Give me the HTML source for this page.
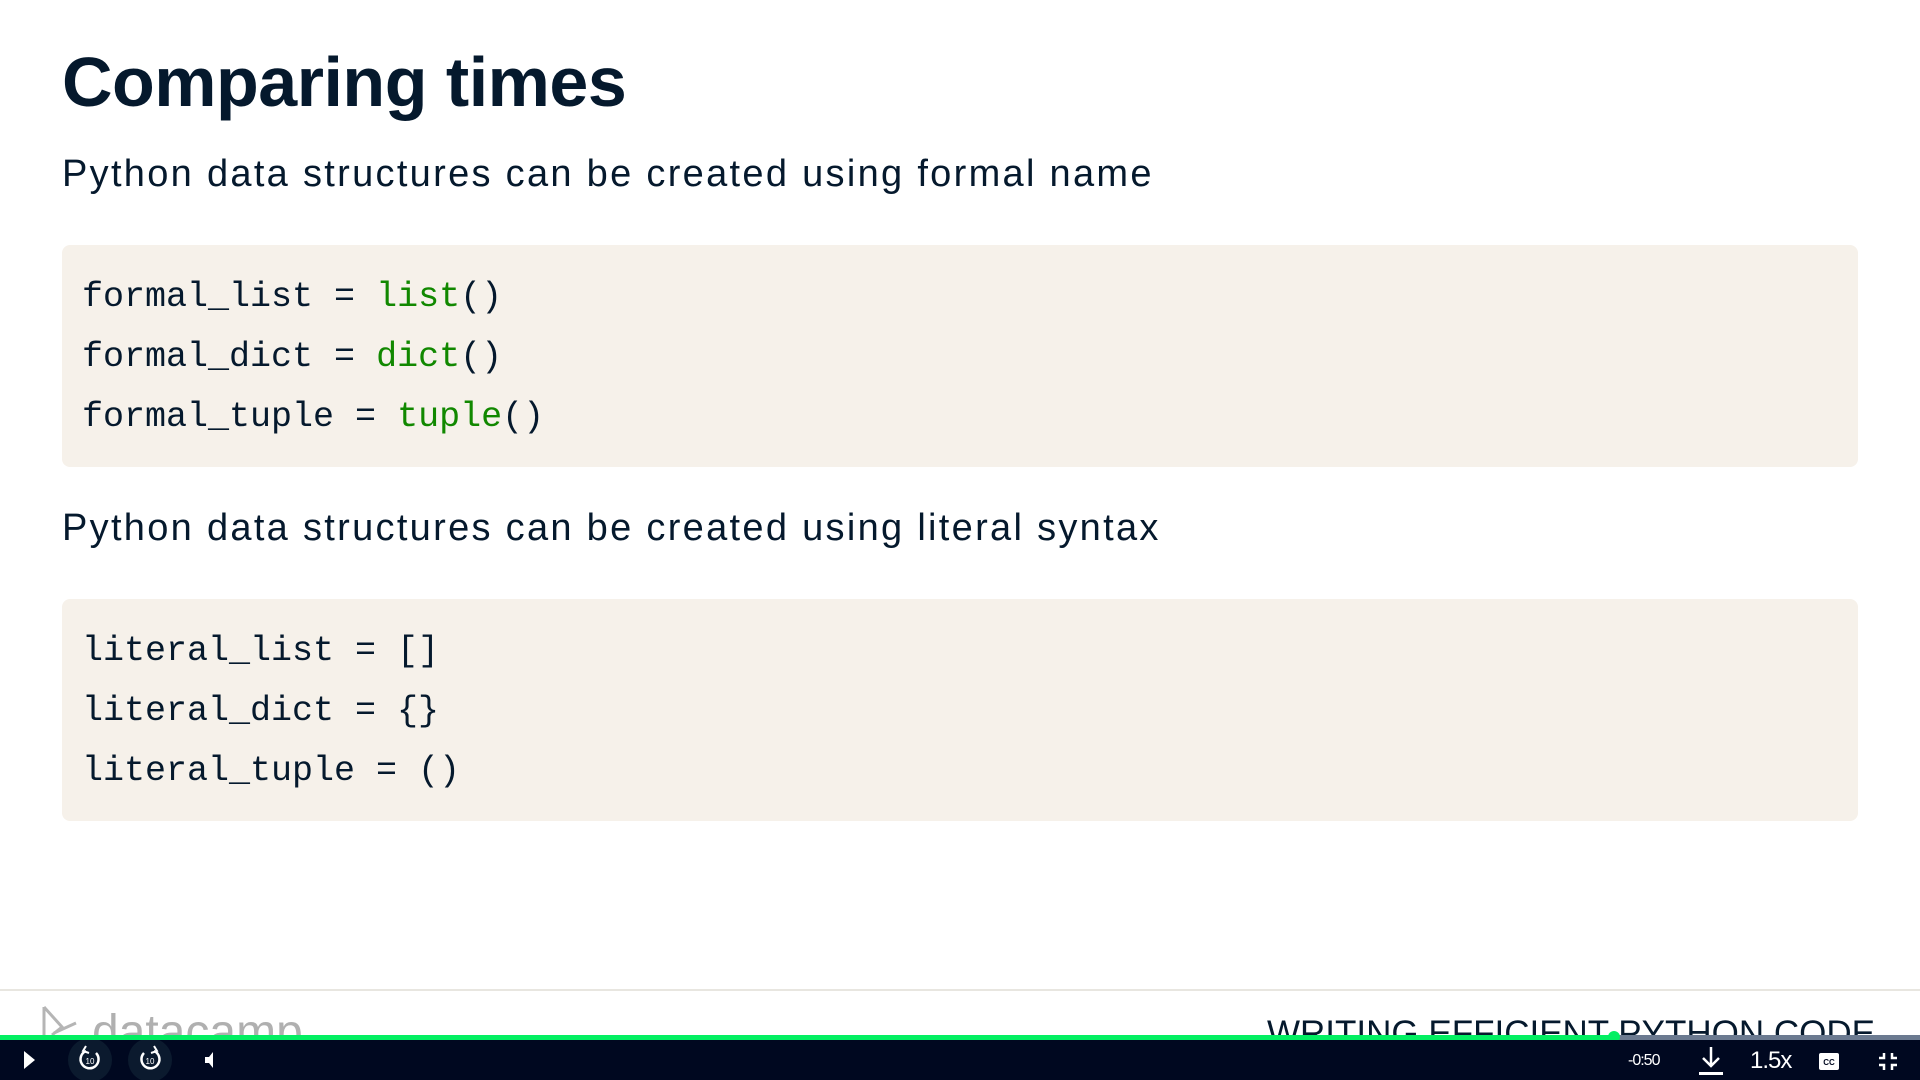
<!DOCTYPE html>
<html><head><meta charset="utf-8"><style>
*{margin:0;padding:0;box-sizing:border-box}
body{width:1920px;height:1080px;background:#fff;position:relative;overflow:hidden;font-family:"Liberation Sans",sans-serif;color:#05192d}
.abs{position:absolute;white-space:nowrap}
h1{position:absolute;left:62px;top:42px;font-size:70px;font-weight:bold;letter-spacing:-0.5px;line-height:80px}
.sub{position:absolute;left:62px;font-size:38px;letter-spacing:2.3px;line-height:44px;white-space:nowrap}
.box{position:absolute;left:62px;width:1796px;height:222px;background:#f6f1ea;border-radius:8px}
.code{position:absolute;left:82px;font-family:"Liberation Mono",monospace;font-size:35px;line-height:40px;white-space:nowrap;color:#05192d}
.g{color:#118800}
</style></head><body>
<h1>Comparing times</h1>
<div class="sub" style="top:152px">Python data structures can be created using formal name</div>
<div class="box" style="top:245px"></div>
<div class="code" style="top:277px">formal_list = <span class="g">list</span>()</div>
<div class="code" style="top:337px">formal_dict = <span class="g">dict</span>()</div>
<div class="code" style="top:397px">formal_tuple = <span class="g">tuple</span>()</div>
<div class="sub" style="top:506px">Python data structures can be created using literal syntax</div>
<div class="box" style="top:599px"></div>
<div class="code" style="top:631px">literal_list = []</div>
<div class="code" style="top:691px">literal_dict = {}</div>
<div class="code" style="top:751px">literal_tuple = ()</div>

<div class="abs" style="left:0;top:989px;width:1920px;height:2px;background:#e8e6e0"></div>
<svg class="abs" style="left:40px;top:1005px" width="45" height="40"><path d="M4 2 L4 34 M4 2 L22 22 L12 30 M14 28 L36 18" stroke="#b5b5b5" stroke-width="3" fill="none"/></svg>
<div class="abs" style="left:92px;top:1005px;font-size:48px;color:#b0b0b0;letter-spacing:0px">datacamp</div>
<div class="abs" style="left:1267px;top:1014px;font-size:35px;color:#05192d">WRITING EFFICIENT PYTHON CODE</div>

<div class="abs" style="left:0;top:1035px;width:1920px;height:5px;background:#6b7a90"></div>
<div class="abs" style="left:0;top:1035px;width:1614px;height:5px;background:#03ef62"></div>
<div class="abs" style="left:1608px;top:1031px;width:12px;height:12px;border-radius:6px;background:#03ef62"></div>
<div class="abs" style="left:0;top:1040px;width:1920px;height:40px;background:#000820"></div>
<svg class="abs" style="left:0;top:1040px" width="240" height="40">
<path d="M24 11 L35 20 L24 29 Z" fill="#fff"/>
<circle cx="90" cy="20" r="22" fill="#0b1a2e"/>
<circle cx="150" cy="20" r="22" fill="#0b1a2e"/>
<path d="M86 11 A9 9 0 1 0 96 13" stroke="#fff" stroke-width="2.5" fill="none"/><path d="M86 6 L83 11 L89 13" stroke="#fff" stroke-width="2" fill="none"/>
<text x="90" y="24" font-size="8" fill="#fff" text-anchor="middle" font-family="Liberation Sans">10</text>
<path d="M154 11 A9 9 0 1 1 144 13" stroke="#fff" stroke-width="2.5" fill="none"/><path d="M154 6 L157 11 L151 13" stroke="#fff" stroke-width="2" fill="none"/>
<text x="150" y="24" font-size="8" fill="#fff" text-anchor="middle" font-family="Liberation Sans">10</text>
<path d="M205 17 L209 17 L213 12 L213 28 L209 23 L205 23 Z" fill="#fff"/>
</svg>
<div class="abs" style="left:1628px;top:1052px;font-size:16px;color:#fff;letter-spacing:-1px">-0:50</div>
<svg class="abs" style="left:1695px;top:1045px" width="220" height="32">
<path d="M16 2 L16 20 M8 13 L16 21 L24 13" stroke="#fff" stroke-width="2.5" fill="none"/><rect x="4" y="27" width="24" height="3" fill="#fff"/>
<rect x="124" y="8" width="20" height="17" rx="2" fill="#fff"/><text x="134" y="20" font-size="8" font-weight="bold" fill="#000820" text-anchor="middle" font-family="Liberation Sans">CC</text>
<path d="M189 8 L189 13 L184 13 M197 8 L197 13 L202 13 M189 25 L189 20 L184 20 M197 25 L197 20 L202 20" stroke="#fff" stroke-width="2.5" fill="none"/>
</svg>
<div class="abs" style="left:1750px;top:1047px;font-size:24px;color:#fff;letter-spacing:-1px">1.5x</div>
</body></html>
